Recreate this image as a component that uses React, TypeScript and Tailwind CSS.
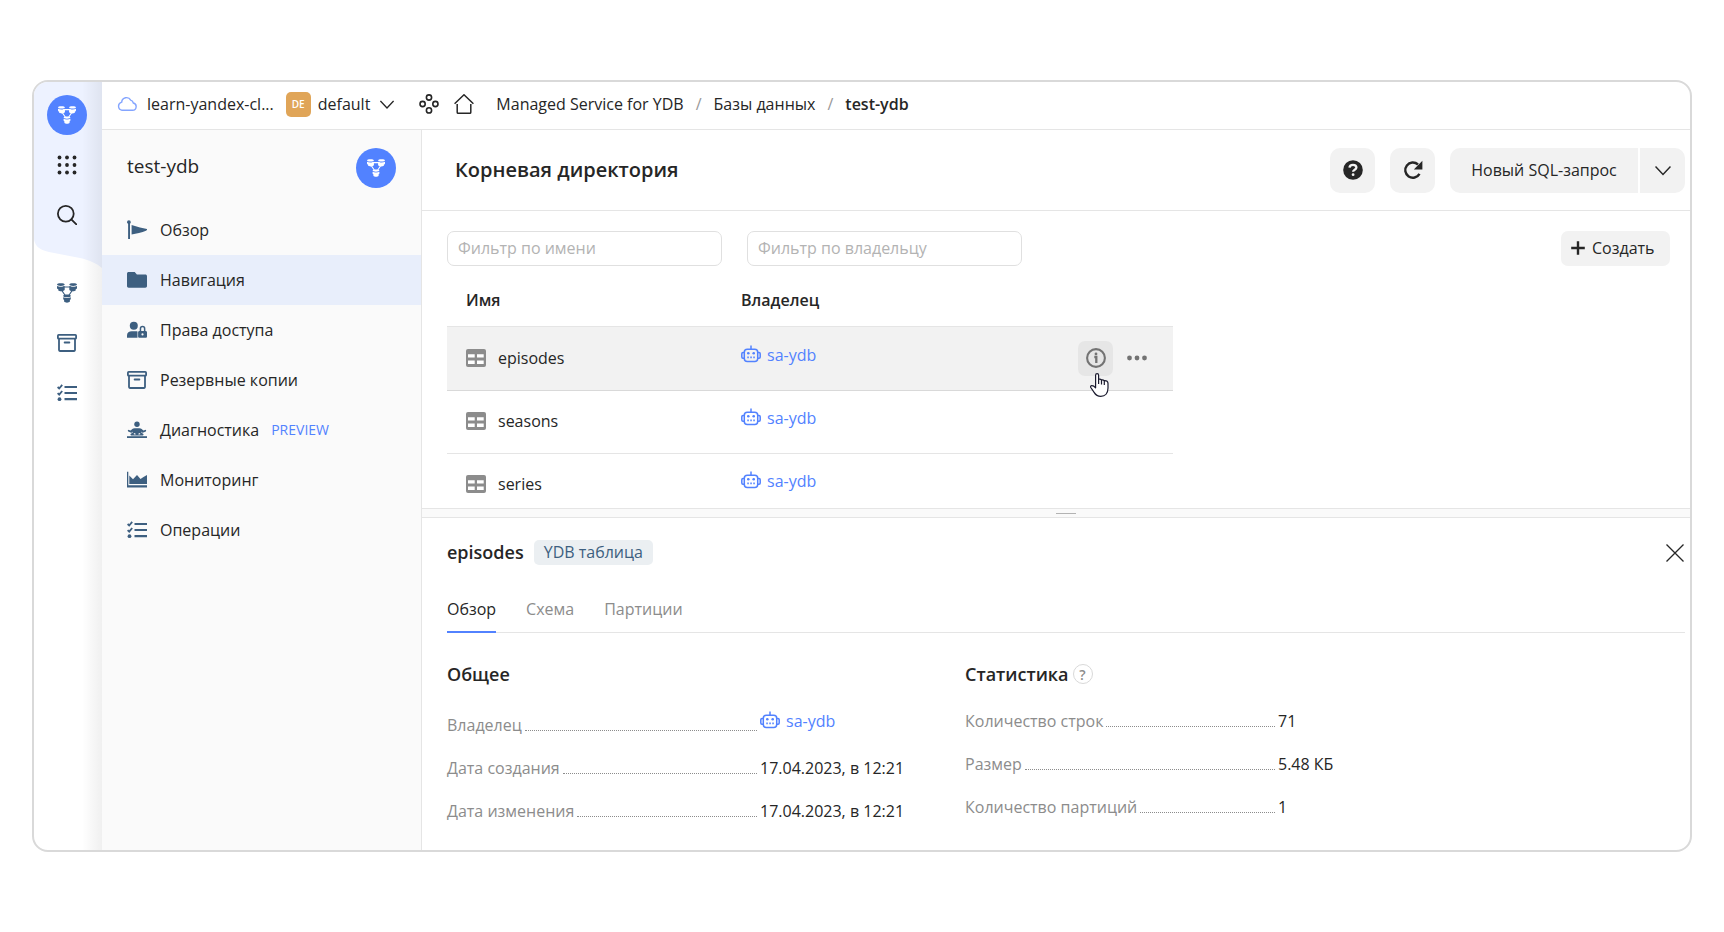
import { type ReactNode, useState } from "react";

type IconProps = { className?: string };

/* ---------- icons ---------- */

function YdbIcon({ className = "size-5" }: IconProps) {
  return (
    <svg className={className} viewBox="0 0 20 20" fill="none">
      <path d="M6 4h8M4.5 7l3.7 5.5M15.5 7l-3.7 5.5" stroke="currentColor" strokeWidth={1.2} />
      <path
        fill="currentColor"
        d="M0 1.5C0 .7 1.6.2 3.8.2s3.9.5 3.9 1.3c0 .8-1.6 1.4-3.9 1.4S0 2.3 0 1.5ZM0 3c.9.5 2.3.8 3.8.8S6.8 3.5 7.7 3v3.8c0 .9-1.7 1.5-3.9 1.500C3 8.300 1.800 8 1.300 7.600V6.300C.5 6 0 5.600 0 5V3Z"
      />
      <path
        fill="currentColor"
        d="M12.300 1.500c0-.8 1.600-1.300 3.900-1.300 2.200 0 3.800.5 3.800 1.300 0 .8-1.600 1.400-3.800 1.400-2.300 0-3.900-.6-3.900-1.400Zm0 1.500c.9.5 2.400.8 3.900.8s2.900-.3 3.800-.8v2c0 .6-.5 1-1.300 1.300v1.300c-.5.4-1.700.7-2.500.7-2.200 0-3.900-.6-3.900-1.500V3Z"
      />
      <path
        fill="currentColor"
        d="M6.200 12.900c0-.8 1.600-1.300 3.800-1.300s3.800.5 3.800 1.300c0 .8-1.600 1.300-3.800 1.300s-3.800-.5-3.800-1.300Zm0 1.400c.9.5 2.300.8 3.800.8s2.900-.3 3.800-.8v1.400c0 .6-.4 1-.9 1.300v1.600c-.5.7-1.700 1.100-2.900 1.100s-2.400-.4-2.900-1.100V17c-.5-.3-.9-.7-.9-1.300v-1.400Z"
      />
    </svg>
  );
}

function GridIcon() {
  return (
    <svg className="size-5" viewBox="0 0 20 20" fill="currentColor">
      {[2.5, 10, 17.5].map((y) => [2.5, 10, 17.5].map((x) => <circle key={`${x}-${y}`} cx={x} cy={y} r={1.9} />))}
    </svg>
  );
}

function SearchIcon() {
  return (
    <svg className="size-5" viewBox="0 0 20 20" fill="none" stroke="currentColor" strokeWidth={1.8}>
      <circle cx={8.8} cy={8.8} r={7.9} />
      <path d="M14.3 14.3l5.2 5.2" strokeLinecap="round" />
    </svg>
  );
}

function ArchiveIcon() {
  return (
    <svg className="size-5" viewBox="0 0 20 20" fill="none" stroke="currentColor" strokeWidth={1.8}>
      <rect x={0.9} y={1.9} width={18.2} height={3.8} rx={0.8} />
      <path d="M2 5.7v11.4c0 .5.3.9.8.9h14.4c.5 0 .8-.4.800-.9V5.700" />
      <path d="M7.600 9.500h4.800" strokeLinecap="round" />
    </svg>
  );
}

function ChecksIcon() {
  return (
    <svg className="size-5" viewBox="0 0 20 20" fill="none" stroke="currentColor">
      <path d="M7.500 4H20M7.500 10H20M7.500 16.200H20" strokeWidth={2.2} />
      <path d="M.6 4l1.600 1.500 3-3.600M.6 10.100l1.600 1.500 3-3.600" strokeWidth={1.8} />
      <circle cx={2.5} cy={16.2} r={1.9} fill="currentColor" stroke="none" />
    </svg>
  );
}

function FlagIcon() {
  return (
    <svg className="size-5" viewBox="0 0 20 20" fill="currentColor">
      <path d="M0 2.200a1.900 1.900 0 0 1 3.800 0c0 .6-.3 1.100-.8 1.500V19H1.100V3.700C.5 3.400 0 2.800 0 2.200Z" />
      <path d="M4.600 5l8.400 2.600 7 1.400c.2.900-.2 1.400-1 1.800-2 .9-4.500 1.600-7 2.300-2.500.7-5 1.100-7.400 1.300V5Z" />
    </svg>
  );
}

function FolderIcon() {
  return (
    <svg className="size-5" viewBox="0 0 20 20" fill="currentColor">
      <path d="M1.700 2h6l2.200 2.600h8.400c1 0 1.700.7 1.700 1.600v9.800c0 1-.7 1.700-1.700 1.700H1.700C.7 17.700 0 17 0 16V3.700C0 2.700.7 2 1.700 2Z" />
    </svg>
  );
}

function AccessIcon() {
  return (
    <svg className="size-5" viewBox="0 0 20 20" fill="currentColor">
      <circle cx={6.8} cy={5.8} r={4} />
      <path d="M0 17.800v-2.600c0-2.500 2.200-4 4.600-4h4.200c.6 0 1.200.1 1.700.3v6.300H0Z" />
      <path
        fillRule="evenodd"
        d="M12.700 10.900V8.700a2.850 2.850 0 0 1 5.700 0v2.200h.3c.7 0 1.300.6 1.300 1.300v4.300c0 .7-.6 1.300-1.300 1.300h-6.300c-.7 0-1.300-.6-1.300-1.300v-4.300c0-.7.6-1.300 1.300-1.300h.3Zm1.500 0h2.700V8.700a1.350 1.350 0 0 0-2.700 0v2.200Zm1.300 4.600a1.100 1.100 0 1 0 0-2.200 1.100 1.100 0 0 0 0 2.200Z"
      />
    </svg>
  );
}

function DiagnosticsIcon() {
  return (
    <svg className="size-5" viewBox="0 0 20 20" fill="currentColor">
      <circle cx={10} cy={4.3} r={2.7} />
      <path
        fillRule="evenodd"
        d="M7.600 8.200h4.800c1 0 1.700.3 2.300.9l1.600 1.500 1.800-.7c.9-.3 1.500 1 .7 1.500l-2.400 1.200c-.4.200-.9.100-1.200-.2l-1-.9.300 1.300 1.600.9c.8.500.5 1.700-.5 1.700H4.400c-1 0-1.300-1.200-.5-1.700l1.600-.9.300-1.300-1 .9c-.3.300-.8.400-1.200.2l-2.400-1.200c-.8-.5-.2-1.800.7-1.500l1.800.7 1.600-1.500c.6-.6 1.300-.9 2.300-.9Zm-.2 4.900-.9 1 1.700.6.500-1-1.300-.6Zm5.200 0-1.300.6.500 1 1.700-.6-.9-1Z"
      />
      <path d="M0 16.200h20v1.800H0z" />
    </svg>
  );
}

function ChartIcon() {
  return (
    <svg className="size-5" viewBox="0 0 20 20" fill="currentColor">
      <path d="M0 1.800h1.300v13.500H20v2.100H0z" />
      <path d="M2.300 14V5.400L6 9.200 10 5l3.500 4L16.500 7 20 5v9H2.300Z" />
    </svg>
  );
}

function TableIcon() {
  return (
    <svg className="size-5" viewBox="0 0 20 20">
      <rect y={1} width={20} height={18} rx={2} fill="#8c8c8c" />
      <path fill="#fff" d="M2 6.200h6.700v3.300H2zM11 6.200h6.700v3.300H11zM2 12.500h6.700v3.500H2zM11 12.500h6.700v3.500H11z" />
    </svg>
  );
}

function RobotIcon() {
  return (
    <svg className="size-5" viewBox="0 0 20 20" fill="none" stroke="currentColor" strokeWidth={1.5}>
      <path d="M10 4.500V.5" />
      <rect x={3.3} y={4.2} width={13.4} height={12.2} rx={3} />
      <path d="M3.300 7.500H2C1.200 7.500.8 8 .8 8.700v3.400c0 .7.4 1.200 1.200 1.200h1.300M16.700 7.500H18c.8 0 1.200.5 1.200 1.200v3.400c0 .7-.4 1.200-1.200 1.200h-1.300" />
      <circle cx={7.3} cy={8.3} r={1.3} fill="currentColor" stroke="none" />
      <circle cx={12.7} cy={8.3} r={1.3} fill="currentColor" stroke="none" />
      <path d="M6.300 11.400h1.500v1.800H6.300zM9.300 11.400h1.500v1.800H9.300zM12.300 11.400h1.500v1.800h-1.500z" fill="currentColor" stroke="none" />
    </svg>
  );
}

function CloudIcon() {
  return (
    <svg className="size-5" viewBox="0 0 20 20" fill="none" stroke="#84a5ff" strokeWidth={1.4}>
      <path d="M5 16.300h10.500a3.700 3.700 0 0 0 .8-7.300 3.700 3.700 0 0 0-2.600-2.800 4.800 4.800 0 0 0-9 1.900A4.200 4.200 0 0 0 5 16.300Z" />
    </svg>
  );
}

function ChevronIcon({ className = "h-4 w-4" }: IconProps) {
  return (
    <svg className={className} viewBox="0 0 16 16" fill="none" stroke="currentColor" strokeWidth={1.5}>
      <path d="M.5 4.500 8 12.500l7.500-8" />
    </svg>
  );
}

function ServicesIcon() {
  return (
    <svg className="size-5" viewBox="0 0 20 20" fill="none" stroke="currentColor" strokeWidth={1.6}>
      <circle cx={10} cy={3.5} r={2.6} />
      <circle cx={3.6} cy={10} r={2.6} />
      <circle cx={16.4} cy={10} r={2.6} />
      <circle cx={10} cy={16.4} r={2.6} />
    </svg>
  );
}

function HomeIcon() {
  return (
    <svg className="size-5" viewBox="0 0 20 20" fill="none" stroke="currentColor" strokeWidth={1.5}>
      <path d="M.6 9.800 10 .8l9.400 9" />
      <path d="M3.200 10v8.300c0 .6.4 1 1 1h11.600c.6 0 1-.4 1-1V10" />
    </svg>
  );
}

function HelpIcon() {
  return (
    <svg className="size-5" viewBox="0 0 20 20" fill="none">
      <circle cx={10} cy={10} r={9.8} fill="currentColor" />
      <path d="M6.500 7.600C6.600 5.600 8.100 4.800 10 4.800c2 0 3.400 1 3.400 2.700 0 2.300-3.300 2.100-3.300 4.300" stroke="#f2f2f2" strokeWidth={2.3} />
      <circle cx={10.1} cy={14.7} r={1.4} fill="#f2f2f2" />
    </svg>
  );
}

function RefreshIcon() {
  return (
    <svg className="size-5" viewBox="0 0 20 20" fill="none">
      <path d="M16.500 13.800A7.600 7.600 0 1 1 15 4.500" stroke="currentColor" strokeWidth={2.4} />
      <path d="M19.400.8v8.600h-8.600z" fill="currentColor" />
    </svg>
  );
}

function PlusIcon() {
  return (
    <svg className="size-[14px]" viewBox="0 0 14 14" stroke="currentColor" strokeWidth={2.4}>
      <path d="M7 .2v13.600M.2 7h13.600" />
    </svg>
  );
}

function InfoIcon() {
  return (
    <svg className="size-5" viewBox="0 0 20 20" fill="none">
      <circle cx={10} cy={10} r={8.9} stroke="currentColor" strokeWidth={2.1} />
      <path d="M8.300 9h2v6" stroke="currentColor" strokeWidth={2.3} />
      <circle cx={10} cy={5.9} r={1.4} fill="currentColor" />
    </svg>
  );
}

function MoreIcon() {
  return (
    <svg className="size-5" viewBox="0 0 20 20" fill="currentColor">
      <circle cx={2.5} cy={10} r={2.4} />
      <circle cx={10} cy={10} r={2.4} />
      <circle cx={17.5} cy={10} r={2.4} />
    </svg>
  );
}

function CloseIcon() {
  return (
    <svg className="size-[18px]" viewBox="0 0 18 18" stroke="currentColor" strokeWidth={1.3}>
      <path d="M.5.5l17 17M17.500.5l-17 17" />
    </svg>
  );
}

function HandCursor() {
  return (
    <svg className="h-6 w-[19px]" viewBox="0 0 19 24" fill="#fff" stroke="#1b1b2f" strokeWidth={1.2} strokeLinejoin="round">
      <path d="M5.600 14.800V2.200c0-1 .6-1.600 1.500-1.600s1.500.6 1.500 1.600v4c1.200-.3 2.300 0 2.800.7 1.200-.3 2.200 0 2.800.7 2.600-.2 3.800.8 3.800 3v4.500c0 5-2.800 8.300-7.200 8.300-3.200 0-5.200-1.500-6.700-4L.8 14.500c-.5-.9 0-1.800.9-1.900 1.500-.1 2.700.7 3.900 2.200Z" />
      <path d="M8.600 6v5M11.500 6.800V11.500M14.300 7.500v4.500" fill="none" />
    </svg>
  );
}

/* ---------- data ---------- */

type NavItem = { label: string; icon: ReactNode; active?: boolean; preview?: boolean };

const NAV: NavItem[] = [
  { label: "Обзор", icon: <FlagIcon /> },
  { label: "Навигация", icon: <FolderIcon />, active: true },
  { label: "Права доступа", icon: <AccessIcon /> },
  { label: "Резервные копии", icon: <ArchiveIcon /> },
  { label: "Диагностика", icon: <DiagnosticsIcon />, preview: true },
  { label: "Мониторинг", icon: <ChartIcon /> },
  { label: "Операции", icon: <ChecksIcon /> },
];

const TABLES = ["episodes", "seasons", "series"];
const TABS = ["Обзор", "Схема", "Партиции"];

/* ---------- shared bits ---------- */

function Owner() {
  return (
    <a href="#owner" className="inline-flex items-center gap-[6px] text-[#5282ff]">
      <RobotIcon />
      sa-ydb
    </a>
  );
}

function YdbBadge() {
  return (
    <span className="grid size-10 place-items-center rounded-full bg-[#5282ff] text-white">
      <YdbIcon className="size-[18px]" />
    </span>
  );
}

function RailButton({ label, children }: { label: string; children: ReactNode }) {
  return (
    <button type="button" aria-label={label} className="grid h-[50px] w-full place-items-center">
      {children}
    </button>
  );
}

function Field({ label, children, tall }: { label: string; children: ReactNode; tall?: boolean }) {
  return (
    <div className={`flex gap-[3px] ${tall ? "h-[47px]" : "h-[43px]"}`}>
      <dt className={`flex w-[310px] items-start gap-[3px] text-[#8c8c8c] ${tall ? "pt-1" : ""}`}>
        {label}
        <span className="mt-[17px] h-px flex-1 border-t border-dotted border-[#8c8c8c]" />
      </dt>
      <dd>{children}</dd>
    </div>
  );
}

/* ---------- page sections ---------- */

function Rail() {
  return (
    <nav className="relative w-[68px] shrink-0 pt-2 pr-[2px] text-[#262626]">
      <svg className="absolute inset-x-0 top-0 h-[186px] w-full" viewBox="0 0 68 186" preserveAspectRatio="none">
        <path fill="#edf2ff" d="M0 0h68v186c-6-5-13-8-22-10L15 170C5 168 0 163 0 156Z" />
      </svg>
      <div className="absolute inset-y-0 right-0 w-5 bg-gradient-to-r from-transparent to-black/6" />
      <div className="relative">
        <RailButton label="YDB"><YdbBadge /></RailButton>
        <RailButton label="Все сервисы"><GridIcon /></RailButton>
        <RailButton label="Поиск"><SearchIcon /></RailButton>
      </div>
      <div className="relative mt-7 text-[#3d5f80]">
        <RailButton label="Базы данных"><YdbIcon /></RailButton>
        <RailButton label="Резервные копии"><ArchiveIcon /></RailButton>
        <RailButton label="Операции"><ChecksIcon /></RailButton>
      </div>
    </nav>
  );
}

function TopBar() {
  return (
    <header className="flex h-12 shrink-0 items-center border-b border-[#e5e5e5] pb-[3px] pl-[15px]">
      <a href="#cloud" className="flex items-center gap-[10px]">
        <CloudIcon />
        learn-yandex-cl...
      </a>
      <a href="#folder" className="ml-3 flex items-center gap-[7px]">
        <span className="grid size-[25px] place-items-center rounded-[5px] bg-[#e0a558] text-[10px] font-semibold text-white">DE</span>
        default
      </a>
      <button type="button" aria-label="Выбрать каталог" className="ml-[10px]">
        <ChevronIcon className="h-4 w-[14px]" />
      </button>
      <a href="#services" aria-label="Сервисы" className="ml-[25px]"><ServicesIcon /></a>
      <a href="#home" aria-label="Главная" className="ml-[15px]"><HomeIcon /></a>
      <nav className="ml-[22px] flex items-center gap-3">
        <a href="#ydb">Managed Service for YDB</a>
        <span className="text-[#999]">/</span>
        <a href="#databases">Базы данных</a>
        <span className="text-[#999]">/</span>
        <span className="font-semibold">test-ydb</span>
      </nav>
    </header>
  );
}

function Sidebar() {
  return (
    <aside className="w-80 shrink-0 border-r border-[#e5e5e5] bg-[#fafafa]">
      <div className="flex h-[75px] items-center justify-between px-[25px]">
        <span className="pb-[3px] text-[19px] font-medium">test-ydb</span>
        <YdbBadge />
      </div>
      {NAV.map((item) => (
        <a
          key={item.label}
          href="#nav"
          className={`flex h-[50px] items-center pl-[25px] ${item.active ? "bg-[#e8eefb]" : ""}`}
        >
          <span className="text-[#3d5f80]">{item.icon}</span>
          <span className="ml-[13px]">{item.label}</span>
          {item.preview && <span className="ml-3 text-sm text-[#5282ff]">PREVIEW</span>}
        </a>
      ))}
    </aside>
  );
}

function TitleBar() {
  return (
    <div className="flex h-[81px] shrink-0 items-center border-b border-[#e5e5e5] pl-[33px] pr-[5px]">
      <h1 className="flex-1 text-xl font-semibold">Корневая директория</h1>
      <button type="button" aria-label="Справка" className="mr-[15px] grid size-[45px] place-items-center rounded-[10px] bg-[#f2f2f2]">
        <HelpIcon />
      </button>
      <button type="button" aria-label="Обновить" className="mr-[15px] grid size-[45px] place-items-center rounded-[10px] bg-[#f2f2f2]">
        <RefreshIcon />
      </button>
      <button type="button" className="mr-[2px] h-[45px] w-[188px] rounded-l-[10px] bg-[#f2f2f2]">
        Новый SQL-запрос
      </button>
      <button type="button" aria-label="Ещё" className="grid size-[45px] place-items-center rounded-r-[10px] bg-[#f2f2f2]">
        <ChevronIcon />
      </button>
    </div>
  );
}

function TableList() {
  return (
    <section className="h-[297px] shrink-0 overflow-hidden pl-[25px] pr-5 pt-5">
      <div className="flex gap-[25px]">
        <input
          aria-label="Фильтр по имени"
          placeholder="Фильтр по имени"
          className="h-[35px] w-[275px] rounded-[7px] border border-[#e0e0e0] px-[10px] pb-[2px] placeholder:text-[#b3b3b3]"
        />
        <input
          aria-label="Фильтр по владельцу"
          placeholder="Фильтр по владельцу"
          className="h-[35px] w-[275px] rounded-[7px] border border-[#e0e0e0] px-[10px] pb-[2px] placeholder:text-[#b3b3b3]"
        />
        <button type="button" className="ml-auto flex h-[35px] w-[109px] items-center gap-[7px] rounded-[7px] bg-[#f2f2f2] pb-px pl-[10px]">
          <PlusIcon />
          Создать
        </button>
      </div>
      <table className="mt-[10px] w-[726px] table-fixed text-left">
        <thead>
          <tr className="h-[50px] border-b border-[#e5e5e5]">
            <th className="w-[275px] pb-[2px] pl-[19px] font-semibold">Имя</th>
            <th className="pb-[2px] pl-[19px] font-semibold">Владелец</th>
            <th className="w-[120px]" aria-label="Действия" />
          </tr>
        </thead>
        <tbody>
          {TABLES.map((name, i) => (
            <tr
              key={name}
              className={`border-b ${i === 0 ? "h-16 border-[#d9d9d9] bg-[#f2f2f2]" : "h-[63px] border-[#e5e5e5]"}`}
            >
              <td className="pb-px pl-[19px]">
                <a href="#table" className="flex items-center gap-3">
                  <TableIcon />
                  {name}
                </a>
              </td>
              <td className="pb-[3px] pl-[19px]"><Owner /></td>
              <td>
                {i === 0 && (
                  <div className="relative flex items-center pl-[25px] text-[#737373]">
                    <button type="button" aria-label="Информация" className="grid size-[35px] place-items-center rounded-[7px] bg-[#e6e6e6]">
                      <InfoIcon />
                    </button>
                    <button type="button" aria-label="Меню" className="ml-[14px]">
                      <MoreIcon />
                    </button>
                    <span className="pointer-events-none absolute left-[37px] top-8"><HandCursor /></span>
                  </div>
                )}
              </td>
            </tr>
          ))}
        </tbody>
      </table>
    </section>
  );
}

function Details() {
  const [tab, setTab] = useState("Обзор");

  return (
    <section className="flex-1 pl-[25px] pr-[5px] pt-[22px]">
      <div className="flex h-[25px] items-center">
        <h2 className="pb-[2px] text-lg font-semibold">episodes</h2>
        <span className="ml-[10px] flex h-[25px] items-center rounded-[5px] bg-[#ebeff2] px-[10px] pb-px text-[#3d5f80]">YDB таблица</span>
        <button type="button" aria-label="Закрыть" className="ml-auto mr-px">
          <CloseIcon />
        </button>
      </div>

      <div role="tablist" className="mt-5 flex h-12 gap-[30px] border-b border-[#e5e5e5]">
        {TABS.map((t) => (
          <button
            key={t}
            type="button"
            role="tab"
            aria-selected={t === tab}
            onClick={() => setTab(t)}
            className={`-mb-px h-12 border-b-2 pt-[2px] ${t === tab ? "border-[#5282ff]" : "border-transparent text-[#8c8c8c]"}`}
          >
            {t}
          </button>
        ))}
      </div>

      <div className="flex pt-[27px]">
        <div className="w-[518px]">
          <h3 className="mb-[21px] text-lg font-semibold">Общее</h3>
          <dl>
            <Field label="Владелец" tall><Owner /></Field>
            <Field label="Дата создания">17.04.2023, в 12:21</Field>
            <Field label="Дата изменения">17.04.2023, в 12:21</Field>
          </dl>
        </div>
        <div>
          <h3 className="mb-[21px] flex items-center gap-1 text-lg font-semibold">
            Статистика
            <button
              type="button"
              aria-label="Справка о статистике"
              className="grid size-5 place-items-center rounded-full border border-[#d9d9d9] text-sm text-[#8c8c8c]"
            >
              ?
            </button>
          </h3>
          <dl>
            <Field label="Количество строк">71</Field>
            <Field label="Размер">5.48 КБ</Field>
            <Field label="Количество партиций">1</Field>
          </dl>
        </div>
      </div>
    </section>
  );
}

export default function App() {
  return (
    <div className="flex min-h-screen bg-white px-8 py-20 font-['Open_Sans',sans-serif] text-base text-[#262626]">
      <div className="flex flex-1 overflow-hidden rounded-2xl border-2 border-[#d9d9d9]">
        <Rail />
        <div className="flex min-w-0 flex-1 flex-col">
          <TopBar />
          <div className="flex flex-1">
            <Sidebar />
            <main className="flex min-w-0 flex-1 flex-col">
              <TitleBar />
              <TableList />
              <div className="grid h-[10px] shrink-0 place-items-center border-y border-[#e5e5e5] bg-[#fafafa] pl-5">
                <div className="h-px w-5 bg-[#b3b3b3]" />
              </div>
              <Details />
            </main>
          </div>
        </div>
      </div>
    </div>
  );
}
